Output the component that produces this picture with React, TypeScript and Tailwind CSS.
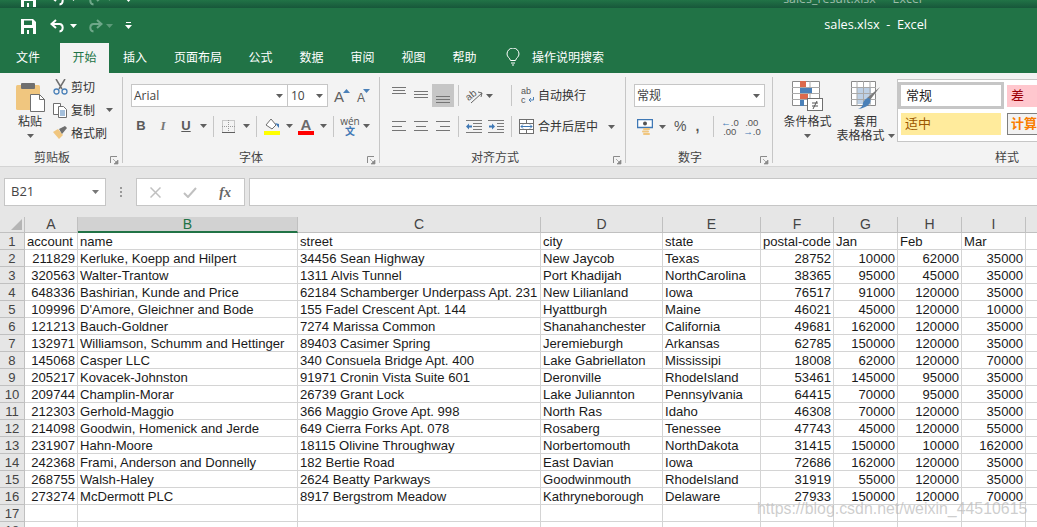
import React from 'react';

const cjk = 'font-["Noto_Sans_CJK_SC","Noto_Sans",sans-serif]';

const rows: (string | number)[][] = [
  [211829, 'Kerluke, Koepp and Hilpert', '34456 Sean Highway', 'New Jaycob', 'Texas', 28752, 10000, 62000, 35000],
  [320563, 'Walter-Trantow', '1311 Alvis Tunnel', 'Port Khadijah', 'NorthCarolina', 38365, 95000, 45000, 35000],
  [648336, 'Bashirian, Kunde and Price', '62184 Schamberger Underpass Apt. 231', 'New Lilianland', 'Iowa', 76517, 91000, 120000, 35000],
  [109996, "D'Amore, Gleichner and Bode", '155 Fadel Crescent Apt. 144', 'Hyattburgh', 'Maine', 46021, 45000, 120000, 10000],
  [121213, 'Bauch-Goldner', '7274 Marissa Common', 'Shanahanchester', 'California', 49681, 162000, 120000, 35000],
  [132971, 'Williamson, Schumm and Hettinger', '89403 Casimer Spring', 'Jeremieburgh', 'Arkansas', 62785, 150000, 120000, 35000],
  [145068, 'Casper LLC', '340 Consuela Bridge Apt. 400', 'Lake Gabriellaton', 'Mississipi', 18008, 62000, 120000, 70000],
  [205217, 'Kovacek-Johnston', '91971 Cronin Vista Suite 601', 'Deronville', 'RhodeIsland', 53461, 145000, 95000, 35000],
  [209744, 'Champlin-Morar', '26739 Grant Lock', 'Lake Juliannton', 'Pennsylvania', 64415, 70000, 95000, 35000],
  [212303, 'Gerhold-Maggio', '366 Maggio Grove Apt. 998', 'North Ras', 'Idaho', 46308, 70000, 120000, 35000],
  [214098, 'Goodwin, Homenick and Jerde', '649 Cierra Forks Apt. 078', 'Rosaberg', 'Tenessee', 47743, 45000, 120000, 55000],
  [231907, 'Hahn-Moore', '18115 Olivine Throughway', 'Norbertomouth', 'NorthDakota', 31415, 150000, 10000, 162000],
  [242368, 'Frami, Anderson and Donnelly', '182 Bertie Road', 'East Davian', 'Iowa', 72686, 162000, 120000, 35000],
  [268755, 'Walsh-Haley', '2624 Beatty Parkways', 'Goodwinmouth', 'RhodeIsland', 31919, 55000, 120000, 35000],
  [273274, 'McDermott PLC', '8917 Bergstrom Meadow', 'Kathryneborough', 'Delaware', 27933, 150000, 120000, 70000],
];
const headers = ['account', 'name', 'street', 'city', 'state', 'postal-code', 'Jan', 'Feb', 'Mar', ''];
const colLetters = ['A', 'B', 'C', 'D', 'E', 'F', 'G', 'H', 'I', ''];
const gridCols = 'grid grid-cols-[25px_53px_220px_243px_122px_98px_73px_64px_64px_64px_11px]';

function Caret({ color = '#5f5f5f', className = '' }: { color?: string; className?: string }) {
  return (
    <svg width="7" height="4" viewBox="0 0 7 4" className={'shrink-0 ' + className}>
      <path d="M0 0h7L3.500 4z" fill={color} />
    </svg>
  );
}

function Sep({ className = '' }: { className?: string }) {
  return <div className={'w-px h-[21px] bg-[#c6c6c6] shrink-0 ' + className} />;
}

// horizontal alignment lines, y is counted from the top of the 23px button
function Lines({ rows: r }: { rows: [number, number, number][] }) {
  return (
    <svg width="16" height="23" viewBox="0 0 16 23" className="shrink-0">
      {r.map(([x, y, w], i) => (
        <rect key={i} x={x} y={y} width={w} height="1" fill="#757575" />
      ))}
    </svg>
  );
}

function QuickBar({ dim = false }: { dim?: boolean }) {
  return (
    <div className="flex items-center h-[16px] pl-[21px]">
      <svg width="15" height="15" viewBox="0 0 15 15">
        <path d="M0 0h12l3 3v12H0z" fill="#fff" />
        <rect x="3" y="1.500" width="8" height="4.500" fill="#217346" />
        <rect x="3" y="9" width="9" height="6" fill="#217346" />
        <rect x="6" y="11" width="2" height="4" fill="#fff" />
      </svg>
      <svg width="16" height="14" viewBox="0 0 16 14" className="ml-[14px]">
        <path d="M6 1 1.500 5 6 9M2 5h7.500c4 0 4.500 7 0 7.500" fill="none" stroke="#fff" strokeWidth="2" />
      </svg>
      <Caret color="#fff" className="ml-[4px]" />
      <svg width="16" height="14" viewBox="0 0 16 14" className="ml-[10px]">
        <path d="M10 1l4.500 4L10 9M14 5H6.500c-4 0-4.500 7 0 7.500" fill="none" stroke="#6fa88a" strokeWidth="2" />
      </svg>
      <Caret color="#5d9a79" className="ml-[3px]" />
      <svg width="7" height="8" viewBox="0 0 7 8" className="ml-[12px]">
        <rect x="1" y="0" width="5" height="1" fill="#fff" />
        <path d="M0 3h7L3.500 7z" fill="#fff" />
      </svg>
      {dim && <div className="ml-auto mr-[115px] text-[12.400px] text-[#9dbcab] whitespace-pre font-['Open_Sans',sans-serif]">sales_result.xlsx  -  Excel</div>}
      {!dim && <div className="ml-auto mr-[110px] -mt-[2px] text-[12.700px] text-white whitespace-pre font-['Open_Sans',sans-serif]">sales.xlsx  -  Excel</div>}
    </div>
  );
}

function Tab({ w, children, active = false }: { w: string; children: React.ReactNode; active?: boolean }) {
  return (
    <div className={`${w} h-[30px] pb-[2px] flex items-center justify-center text-[12px] ${active ? 'bg-[#f3f3f3] text-[#217346]' : 'text-white'}`}>
      {children}
    </div>
  );
}

function Launcher() {
  return (
    <svg width="9" height="9" viewBox="0 0 9 9" className="shrink-0">
      <path d="M0.500 7V0.500H7" fill="none" stroke="#8a8a8a" />
      <path d="M3 3l4 4M8 4v4H4z" fill="#8a8a8a" stroke="#8a8a8a" strokeWidth="0.700" />
    </svg>
  );
}

function Group({ w, label, labelPad = '', pad = '', children }: { w: string; label: string; labelPad?: string; pad?: string; children: React.ReactNode }) {
  return (
    <div className={`${w} h-[86px] mt-[4px] flex flex-col shrink-0 border-r border-[#c6c6c6]`}>
      <div className={`h-[72px] ${pad}`}>{children}</div>
      <div className="h-[14px] flex items-start relative">
        <div className={`flex-1 text-center text-[12px] leading-[16px] text-[#444] ${labelPad}`}>{label}</div>
        <div className="absolute right-[3px] top-[7px]"><Launcher /></div>
      </div>
    </div>
  );
}

function Clipboard() {
  return (
    <Group w="w-[123px]" label="剪贴板" labelPad="pr-[18px]">
      <div className="flex pt-[6px]">
        <div className="w-[53px] flex flex-col items-center pl-[7px]">
          <svg width="29" height="29" viewBox="0 0 29 29">
            <rect x="0" y="2" width="24" height="25" rx="1.500" fill="#f0c67f" />
            <rect x="5" y="0" width="14" height="6" rx="1" fill="#6f6f6f" />
            <path d="M14.500 11.500h9l5 5v12h-14z" fill="#fff" stroke="#6f6f6f" />
            <path d="M23.500 11.500v5h5" fill="none" stroke="#6f6f6f" />
          </svg>
          <div className="text-[12px] leading-[16px] mt-[1px] text-[#333]">粘贴</div>
          <Caret className="mt-[5px]" />
        </div>
        <div className="flex flex-col gap-[7px] text-[12px] leading-[16px] text-[#333] -mt-[4px]">
          <div className="flex items-center gap-[3px]">
            <svg width="15" height="16" viewBox="0 0 15 16">
              <path d="M3 0l6 10M12 0 6 10" stroke="#6f6f6f" strokeWidth="1.500" />
              <circle cx="3.500" cy="12.500" r="2.500" fill="none" stroke="#4a80b8" strokeWidth="1.300" />
              <circle cx="11.500" cy="12.500" r="2.500" fill="none" stroke="#4a80b8" strokeWidth="1.300" />
            </svg>
            剪切
          </div>
          <div className="flex items-center gap-[3px]">
            <svg width="15" height="15" viewBox="0 0 15 15">
              <path d="M0.500 0.500h7v11h-7z" fill="#fff" stroke="#6f6f6f" />
              <path d="M5.500 3.500h5l3 3v8h-8z" fill="#fff" stroke="#6f6f6f" />
              <path d="M7 8h5M7 10h5M7 12h5" stroke="#4a80b8" />
            </svg>
            复制
            <Caret className="ml-[8px]" />
          </div>
          <div className="flex items-center gap-[3px]">
            <svg width="15" height="14" viewBox="0 0 15 14">
              <path d="M0 6l5-3 5 6-4 4z" fill="#f0c67f" />
              <path d="M6 3l6-3 2 2-5 6z" fill="#6f6f6f" />
            </svg>
            格式刷
          </div>
        </div>
      </div>
    </Group>
  );
}

function FontGroup() {
  return (
    <Group w="w-[257px]" label="字体" pad="pl-[8px]">
      <div className="flex items-center pt-[7px]">
        <div className="w-[157px] h-[23px] bg-white border border-[#c6c6c6] flex items-center justify-between pl-[2px] pr-[4px] text-[12px] text-[#444] font-['Open_Sans',sans-serif]">
          Arial<Caret />
        </div>
        <div className="w-[40px] h-[23px] bg-white border border-l-0 border-[#c6c6c6] flex items-center justify-between pl-[3px] pr-[4px] text-[12px] text-[#444] font-['Open_Sans',sans-serif]">
          10<Caret />
        </div>
        <div className="ml-[6px] w-[14px] h-[20px] flex items-start">
          <span className="text-[15px] leading-[20px] text-[#5f5f5f] font-['Liberation_Sans',sans-serif] mt-[1px]">A</span>
          <Caret color="#4a80b8" className="rotate-180 -ml-[1px] mt-[3px]" />
        </div>
        <div className="ml-[9px] w-[14px] h-[20px] flex items-start">
          <span className="text-[12px] leading-[20px] text-[#5f5f5f] font-['Liberation_Sans',sans-serif] mt-[2px]">A</span>
          <Caret color="#4a80b8" className="mt-[3px] -ml-[2px]" />
        </div>
      </div>
      <div className="flex items-center h-[22px] mt-[8px] pl-[4px] text-[#5a5a5a]">
        <span className="w-[12px] text-center text-[13px] font-bold font-['Liberation_Sans',sans-serif]">B</span>
        <span className="w-[12px] ml-[10px] text-center text-[13px] italic font-bold text-[#777] font-['Liberation_Serif',serif]">I</span>
        <span className="w-[12px] ml-[11px] text-center text-[13px] font-bold underline font-['Liberation_Sans',sans-serif]">U</span>
        <Caret className="ml-[8px]" />
        <Sep className="ml-[6px]" />
        <svg width="13" height="13" viewBox="0 0 13 13" className="ml-[8px]">
          <rect x="0.500" y="0.500" width="12" height="12" fill="none" stroke="#9a9a9a" strokeDasharray="1 1" />
          <path d="M6.500 0v13M0 6.500h13" stroke="#9a9a9a" strokeDasharray="1 1" />
          <path d="M0 12.500h13" stroke="#5f5f5f" />
        </svg>
        <Caret className="ml-[8px]" />
        <Sep className="ml-[6px]" />
        <svg width="16" height="17" viewBox="0 0 16 17" className="ml-[7px]">
          <path d="M2 7l5-6 5 6-4 4z" fill="#fff" stroke="#6f6f6f" />
          <path d="M11 5l4 1v4z" fill="#3f78b5" />
          <rect x="0" y="13" width="16" height="4" fill="#ffff00" />
        </svg>
        <Caret className="ml-[6px]" />
        <div className="ml-[5px] w-[16px] flex flex-col items-center">
          <span className="text-[15px] leading-[13px] font-bold text-[#6a6a6a] font-['Liberation_Sans',sans-serif]">A</span>
          <div className="w-[16px] h-[4px] bg-[#ff0000]" />
        </div>
        <Caret className="ml-[6px]" />
        <Sep className="ml-[6px]" />
        <div className="ml-[8px] w-[16px] flex flex-col items-center">
          <span className="text-[10px] leading-[9px] text-[#555] font-['Open_Sans',sans-serif]">wén</span>
          <span className="text-[10px] leading-[10px] font-bold text-[#3f78b5]">文</span>
        </div>
        <Caret className="ml-[5px]" />
      </div>
    </Group>
  );
}

function AlignGroup() {
  return (
    <Group w="w-[246px]" label="对齐方式" labelPad="pr-[15px]" pad="pl-[8px]">
      <div className="flex items-center pt-[7px] h-[30px]">
        <div className="w-[22px] flex justify-center"><Lines rows={[[1, 3, 14], [2, 6, 12], [1, 9, 14]]} /></div>
        <div className="w-[22px] flex justify-center"><Lines rows={[[1, 7, 14], [1, 10, 14], [1, 13, 14]]} /></div>
        <div className="w-[22px] h-[23px] flex justify-center items-center bg-[#c6c6c6]"><Lines rows={[[1, 12, 14], [1, 15, 14], [1, 18, 14]]} /></div>
        <Sep className="ml-[4px]" />
        <svg width="17" height="17" viewBox="0 0 17 17" className="ml-[7px] overflow-visible">
          <text x="0" y="11" fontSize="10" fontFamily="Liberation Sans" fill="#555" transform="rotate(-38 6 9)">ab</text>
          <path d="M5 16 16 6M12 5l4 1-1 4" fill="none" stroke="#666" />
        </svg>
        <Caret className="ml-[3px]" />
        <Sep className="ml-[18px]" />
        <svg width="14" height="17" viewBox="0 0 14 17" className="ml-[9px] overflow-visible">
          <text x="0" y="7" fontSize="9" fontFamily="Liberation Sans" fill="#555">ab</text>
          <text x="0" y="16" fontSize="9" fontFamily="Liberation Sans" fill="#555">c</text>
          <path d="M12.500 10v3H8M10 11l-2 2 2 2" fill="none" stroke="#4a80b8" />
        </svg>
        <span className="ml-[3px] pb-[2px] text-[12px] text-[#333]">自动换行</span>
      </div>
      <div className="flex items-center mt-[8px] h-[23px]">
        <div className="w-[22px] flex justify-center"><Lines rows={[[1, 6, 14], [1, 11, 10], [1, 15, 14]]} /></div>
        <div className="w-[22px] flex justify-center"><Lines rows={[[1, 6, 14], [3, 11, 10], [1, 15, 14]]} /></div>
        <div className="w-[22px] flex justify-center"><Lines rows={[[1, 6, 14], [5, 11, 10], [1, 15, 14]]} /></div>
        <Sep className="ml-[4px]" />
        <svg width="16" height="13" viewBox="0 0 16 13" className="ml-[7px]">
          <path d="M0 .500h16M7 3.500h9M7 6.500h9M7 9.500h9M0 12.500h16" stroke="#7a7a7a" />
          <path d="M0 6.500l3-3v2h3v2H3v2z" fill="#3f78b5" />
        </svg>
        <svg width="16" height="13" viewBox="0 0 16 13" className="ml-[6px]">
          <path d="M0 .500h16M9 3.500h7M9 6.500h7M9 9.500h7M0 12.500h16" stroke="#7a7a7a" />
          <path d="M7 6.500l-3-3v2H1v2h3v2z" fill="#3f78b5" />
        </svg>
        <Sep className="ml-[7px]" />
        <svg width="15" height="15" viewBox="0 0 15 15" className="ml-[7px]">
          <rect x="0.500" y="0.500" width="14" height="14" fill="#fff" stroke="#6f6f6f" />
          <path d="M0 4.500h15M0 10.500h15M7.500 0v4M7.500 11v4" stroke="#6f6f6f" />
          <path d="M2 7.500h11M4 5.500l-2 2 2 2M11 5.500l2 2-2 2" fill="none" stroke="#3f78b5" />
        </svg>
        <span className="ml-[4px] pb-[2px] text-[12px] text-[#333]">合并后居中</span>
        <Caret className="ml-[10px]" />
      </div>
    </Group>
  );
}

function NumberGroup() {
  return (
    <Group w="w-[147px]" label="数字" labelPad="pr-[18px]" pad="pl-[8px]">
      <div className="pt-[7px]">
        <div className="w-[131px] h-[23px] bg-white border border-[#c6c6c6] flex items-center justify-between pl-[2px] pr-[4px] text-[12px] text-[#444]">
          <span className="pb-[2px]">常规</span><Caret />
        </div>
      </div>
      <div className="flex items-center h-[23px] mt-[8px] pl-[3px]">
        <svg width="16" height="16" viewBox="0 0 16 16">
          <rect x="0.500" y="0.500" width="15" height="8" fill="#fff" stroke="#3f78b5" strokeWidth="1.500" />
          <circle cx="8" cy="4.500" r="2" fill="#555" />
          <rect x="6" y="9" width="7" height="2" rx="1" fill="#f0c67f" />
          <rect x="5" y="11.500" width="7" height="2" rx="1" fill="#f0c67f" />
          <rect x="6" y="14" width="7" height="2" rx="1" fill="#f0c67f" />
        </svg>
        <Caret className="ml-[6px]" />
        <span className="ml-[8px] text-[14px] text-[#555] font-['Liberation_Sans',sans-serif]">%</span>
        <span className="ml-[9px] text-[14px] font-bold text-[#555] font-['Liberation_Sans',sans-serif]">,</span>
        <Sep className="ml-[14px]" />
        <div className="ml-[7px] w-[15px] flex flex-col leading-[9px] text-[9.500px] text-[#555] text-right font-['Liberation_Sans',sans-serif]">
          <span className="whitespace-nowrap"><span className="text-[#3f78b5]">←</span>.0</span>
          <span>.00</span>
        </div>
        <div className="ml-[7px] w-[15px] flex flex-col leading-[9px] text-[9.500px] text-[#555] text-right font-['Liberation_Sans',sans-serif]">
          <span>.00</span>
          <span className="whitespace-nowrap"><span className="text-[#3f78b5]">→</span>.0</span>
        </div>
      </div>
    </Group>
  );
}

function Styles() {
  return (
    <div className="flex-1 h-[88px] mt-[4px] flex flex-col overflow-hidden">
      <div className="h-[72px] flex">
        <div className="w-[69px] flex flex-col items-center pt-[4px] text-[12px] leading-[16px] text-[#333]">
          <svg width="31" height="30" viewBox="0 0 31 30">
            <path d="M.500.500h27v24H.500z" fill="#fff" stroke="#8a8a8a" />
            <path d="M9 0v25M18 0v25M0 6.500h28M0 12.500h28M0 18.500h28" stroke="#a9a9a9" />
            <rect x="8" y="0" width="6" height="6" fill="#dc6a4c" />
            <rect x="8" y="7" width="12" height="5" fill="#4a80b8" />
            <rect x="8" y="13" width="8" height="5" fill="#dc6a4c" />
            <rect x="8" y="19" width="4" height="6" fill="#4a80b8" />
            <rect x="15.500" y="17.500" width="15" height="12" fill="#fff" stroke="#6f6f6f" />
            <path d="M20 22h6M20 25h6M25 20l-4 8" stroke="#555" fill="none" />
          </svg>
          <div className="mt-[2px]">条件格式</div>
          <Caret className="mt-[5px]" />
        </div>
        <div className="w-[55px] pr-[8px] flex flex-col items-center pt-[4px] text-[12px] leading-[16px] text-[#333]">
          <svg width="30" height="30" viewBox="0 0 30 30" className="shrink-0">
            <path d="M.500.500h24v24H.500z" fill="#fff" stroke="#8a8a8a" />
            <rect x="6" y="6" width="14" height="17" fill="#bdd0e5" />
            <path d="M6 0v25M12.500 0v25M19 0v25M0 6.500h25M0 12.500h25M0 18.500h25" stroke="#a9a9a9" />
            <path d="M29 6 19 19l-3-2z" fill="#7a7a7a" />
            <path d="M12 22c2-5 6-6 7-4 2 4-3 9-12 10 3-1 5-3 5-6z" fill="#4a80b8" />
          </svg>
          <div className="mt-[2px]">套用</div>
          <div className="whitespace-nowrap -mt-[2px]">表格格式<Caret className="inline-block ml-[3px] mb-[2px]" /></div>
        </div>
        <div className="w-[140px] h-[63px] mt-[2px] border border-[#c6c6c6] border-r-0 bg-white text-[13px] grid grid-cols-[109px_31px] grid-rows-[31px_30px] shrink-0">
          <div className="border-[3px] border-[#c6c6c6] w-[106px] h-[27px] mt-[2px] pb-[2px] flex items-center pl-[5px] text-[#222]">常规</div>
          <div className="bg-[#ffc7ce] text-[#9c0006] h-[22px] mt-[5px] pb-[2px] flex items-center pl-[4px] whitespace-nowrap">差</div>
          <div className="bg-[#ffeb9c] text-[#9c5700] w-[100px] h-[22px] ml-[3px] mt-[2px] pb-[2px] flex items-center pl-[4px]">适中</div>
          <div className="bg-[#f2f2f2] text-[#fa7d00] border border-[#7f7f7f] border-r-0 h-[22px] mt-[2px] pb-[2px] flex items-center pl-[3px] whitespace-nowrap overflow-hidden font-bold">计算</div>
        </div>
      </div>
      <div className="h-[16px] text-right pr-[18px] text-[12px] leading-[16px] text-[#444]">样式</div>
    </div>
  );
}

function Cell({ v, i }: { v: string | number; i: number }) {
  const isNum = typeof v === 'number';
  return (
    <div className={`h-[17px] border-r border-b border-[#d4d4d4] bg-white overflow-hidden whitespace-nowrap leading-[18px] ${isNum ? 'text-right pr-[2px]' : 'text-left pl-[2px]'} ${i === 9 ? 'border-r-0' : ''}`}>
      {v}
    </div>
  );
}

function RowHead({ n }: { n: number }) {
  return (
    <div className="h-[17px] bg-[#e6e6e6] border-r border-b border-[#c0c0c0] text-center leading-[18px] text-[#444]">{n}</div>
  );
}

function Sheet() {
  return (
    <div className={`${gridCols} bg-white text-[13.100px] text-[#1a1a1a] font-['Liberation_Sans',sans-serif]`}>
      <div className="h-[16px] bg-[#e6e6e6] border-r border-b border-[#c0c0c0] flex items-end justify-end pr-[2px] pb-[2px]">
        <svg width="11" height="11" viewBox="0 0 11 11"><path d="M11 0v11H0z" fill="#b5b5b5" /></svg>
      </div>
      {colLetters.map((c, i) => (
        <div
          key={i}
          className={`h-[16px] text-center leading-[14px] text-[14px] ${i === 1 ? 'bg-[#d2d2d2] border-b-2 border-[#217346] text-[#217346]' : 'bg-[#e6e6e6] border-b border-[#c0c0c0] text-[#444]'} ${i === 9 ? '' : 'border-r border-r-[#c0c0c0]'}`}
        >
          {c}
        </div>
      ))}
      <RowHead n={1} />
      {headers.map((h, i) => <Cell key={i} v={h} i={i} />)}
      {rows.map((r, ri) => (
        <React.Fragment key={ri}>
          <RowHead n={ri + 2} />
          {r.map((v, i) => <Cell key={i} v={v} i={i} />)}
          <Cell v="" i={9} />
        </React.Fragment>
      ))}
      {[17, 18].map(n => (
        <React.Fragment key={n}>
          <RowHead n={n} />
          {colLetters.map((_, i) => <Cell key={i} v="" i={i} />)}
        </React.Fragment>
      ))}
    </div>
  );
}

export default function App() {
  return (
    <div className={`relative w-[1037px] h-[527px] overflow-hidden bg-[#e6e6e6] ${cjk}`}>
      <div className="h-[8px] overflow-hidden bg-gradient-to-b from-[#217346] to-[#17573a]">
        <div className="-mt-[9px]"><QuickBar dim /></div>
      </div>
      <div className="h-[65px] bg-[#217346] flex flex-col">
        <div className="h-[35px] flex items-center pt-[1px]">
          <div className="flex-1"><QuickBar /></div>
        </div>
        <div className="flex items-center">
          <Tab w="w-[56px]">文件</Tab>
          <div className="w-[4px]" />
          <Tab w="w-[49px]" active>开始</Tab>
          <Tab w="w-[52px]">插入</Tab>
          <Tab w="w-[74px]">页面布局</Tab>
          <Tab w="w-[51px]">公式</Tab>
          <Tab w="w-[51px]">数据</Tab>
          <Tab w="w-[51px]">审阅</Tab>
          <Tab w="w-[51px]">视图</Tab>
          <Tab w="w-[51px]">帮助</Tab>
          <svg width="14" height="18" viewBox="0 0 14 18" fill="none" stroke="#fff" className="ml-[16px] -mt-[2px]">
            <path d="M4.500 12.500C4 10 1 9 1 6a6 6 0 0 1 12 0c0 3-3 4-3.500 6.500z" />
            <path d="M5 15h4M6 17h2" />
          </svg>
          <div className="ml-[12px] -mt-[2px] text-[12px] text-white">操作说明搜索</div>
        </div>
      </div>
      <div className="h-[94px] bg-[#f3f3f3] flex border-b border-[#d4d4d4]">
        <Clipboard />
        <FontGroup />
        <AlignGroup />
        <NumberGroup />
        <Styles />
      </div>
      <div className="h-[50px] flex items-start pt-[11px] pl-[4px]">
        <div className="w-[102px] h-[28px] bg-white border border-[#c6c6c6] flex items-center justify-between pl-[6px] pr-[6px] text-[13px] text-[#444] font-['Open_Sans',sans-serif]">
          B21<Caret color="#777" />
        </div>
        <div className="w-[30px] h-[28px] flex flex-col items-center justify-center gap-[2px]">
          <div className="w-[2px] h-[2px] bg-[#999]" />
          <div className="w-[2px] h-[2px] bg-[#999]" />
          <div className="w-[2px] h-[2px] bg-[#999]" />
        </div>
        <div className="w-[109px] h-[28px] bg-white border border-[#c6c6c6] flex items-center justify-around px-[2px]">
          <svg width="11" height="11" viewBox="0 0 11 11"><path d="M.5.500l10 10M10.500.500l-10 10" stroke="#c0c0c0" strokeWidth="1.500" /></svg>
          <svg width="14" height="11" viewBox="0 0 14 11" fill="none"><path d="M1 6l4 4 8-9" stroke="#c0c0c0" strokeWidth="2" /></svg>
          <span className="text-[14px] italic font-bold text-[#666] font-['Liberation_Serif',serif]">fx</span>
        </div>
        <div className="ml-[4px] flex-1 h-[28px] bg-white border-y border-l border-[#c6c6c6]" />
      </div>
      <Sheet />
      <div className="absolute left-[757px] top-[497px] text-[15.900px] whitespace-nowrap text-[#b8b8b8]/70 font-['Liberation_Sans',sans-serif]">https://blog.csdn.net/weixin_44510615</div>
    </div>
  );
}
